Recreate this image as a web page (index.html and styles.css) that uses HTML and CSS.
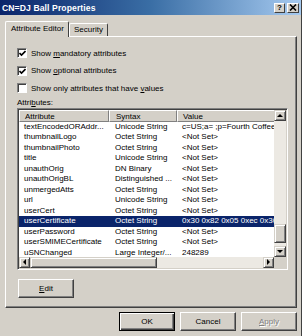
FILE: index.html
```html
<!DOCTYPE html>
<html>
<head>
<meta charset="utf-8">
<link rel="stylesheet" href="styles.css">
</head>
<body>
<div class="window">
  <div class="titlebar">
    <span class="title">CN=DJ Ball Properties</span>
    <div class="tbtns">
      <span class="tbtn">?</span>
      <span class="tbtn close"><svg width="8" height="7" viewBox="0 0 8 7"><path d="M1 0.5 L7 6.5 M7 0.5 L1 6.5" stroke="#000" stroke-width="1.6"/></svg></span>
    </div>
  </div>
  <div class="client">
    <div class="tabs">
      <div class="tab active">Attribute Editor</div>
      <div class="tab">Security</div>
    </div>
    <div class="panel">
      <label class="chk"><span class="box"><svg width="7" height="7" viewBox="0 0 7 7"><path d="M0.5 3 L2.5 5 L6.5 1" fill="none" stroke="#000" stroke-width="1.6"/></svg></span><span>Show <u>m</u>andatory attributes</span></label>
      <label class="chk"><span class="box"><svg width="7" height="7" viewBox="0 0 7 7"><path d="M0.5 3 L2.5 5 L6.5 1" fill="none" stroke="#000" stroke-width="1.6"/></svg></span><span>Show <u>o</u>ptional attributes</span></label>
      <label class="chk"><span class="box"></span><span>Show only attributes that have <u>v</u>alues</span></label>
      <div class="lbl">Attri<u>b</u>utes:</div>
      <div class="listview">
        <div class="lv-main">
          <div class="lv-row lv-head">
            <div class="c1 hc">Attribute</div>
            <div class="c2 hc">Syntax</div>
            <div class="c3 hc">Value</div>
          </div>
          <div class="lv-row"><div class="c1">textEncodedORAddr...</div><div class="c2">Unicode String</div><div class="c3">c=US;a= ;p=Fourth Coffee</div></div>
          <div class="lv-row"><div class="c1">thumbnailLogo</div><div class="c2">Octet String</div><div class="c3">&lt;Not Set&gt;</div></div>
          <div class="lv-row"><div class="c1">thumbnailPhoto</div><div class="c2">Octet String</div><div class="c3">&lt;Not Set&gt;</div></div>
          <div class="lv-row"><div class="c1">title</div><div class="c2">Unicode String</div><div class="c3">&lt;Not Set&gt;</div></div>
          <div class="lv-row"><div class="c1">unauthOrig</div><div class="c2">DN Binary</div><div class="c3">&lt;Not Set&gt;</div></div>
          <div class="lv-row"><div class="c1">unauthOrigBL</div><div class="c2">Distinguished ...</div><div class="c3">&lt;Not Set&gt;</div></div>
          <div class="lv-row"><div class="c1">unmergedAtts</div><div class="c2">Octet String</div><div class="c3">&lt;Not Set&gt;</div></div>
          <div class="lv-row"><div class="c1">url</div><div class="c2">Unicode String</div><div class="c3">&lt;Not Set&gt;</div></div>
          <div class="lv-row"><div class="c1">userCert</div><div class="c2">Octet String</div><div class="c3">&lt;Not Set&gt;</div></div>
          <div class="lv-row sel"><div class="c1">userCertificate</div><div class="c2">Octet String</div><div class="c3">0x30 0x82 0x05 0xec 0x30</div></div>
          <div class="lv-row"><div class="c1">userPassword</div><div class="c2">Octet String</div><div class="c3">&lt;Not Set&gt;</div></div>
          <div class="lv-row"><div class="c1">userSMIMECertificate</div><div class="c2">Octet String</div><div class="c3">&lt;Not Set&gt;</div></div>
          <div class="lv-row"><div class="c1">uSNChanged</div><div class="c2">Large Integer/...</div><div class="c3">248289</div></div>
        </div>
        <div class="vscroll">
          <div class="sbtn"><span class="tri up"></span></div>
          <div class="vtrack">
            <div class="vthumb"></div>
          </div>
          <div class="sbtn"><span class="tri down"></span></div>
        </div>
        <div class="hscroll">
          <div class="sbtn"><span class="tri left"></span></div>
          <div class="hthumb"></div>
          <div class="htrack"></div>
          <div class="sbtn"><span class="tri right"></span></div>
        </div>
        <div class="corner"></div>
      </div>
      <div class="btn edit"><span><u>E</u>dit</span></div>
    </div>
    <div class="footer">
      <div class="btn def">OK</div>
      <div class="btn">Cancel</div>
      <div class="btn dis"><span><u>A</u>pply</span></div>
    </div>
  </div>
</div>
</body>
</html>
```
FILE: styles.css
```css
html, body {
  margin: 0;
  padding: 0;
  background: #d4d0c8;
}
body {
  font-family: "Liberation Sans", Arial, sans-serif;
  font-size: 8px;
  color: #000;
}
.window {
  width: 302px;
  height: 336px;
  box-sizing: border-box;
  border-right: 1px solid #404040;
  display: flex;
  flex-direction: column;
  overflow: hidden;
}
.titlebar {
  height: 15px;
  background: linear-gradient(to right, #0a246a 0%, #3a6ea5 50%, #a6caf0 100%);
  display: flex;
  align-items: center;
  padding-left: 2px;
  padding-right: 2px;
  box-sizing: border-box;
}
.title {
  color: #fff;
  font-weight: bold;
  font-size: 8.6px;
  letter-spacing: 0.1px;
}
.tbtns {
  margin-left: auto;
  display: flex;
  gap: 2px;
}
.tbtn {
  width: 11px;
  height: 10px;
  box-sizing: border-box;
  background: #d4d0c8;
  border-top: 1px solid #fff;
  border-left: 1px solid #fff;
  border-right: 1px solid #404040;
  border-bottom: 1px solid #404040;
  font-weight: bold;
  font-size: 8px;
  line-height: 8px;
  text-align: center;
  display: flex;
  align-items: center;
  justify-content: center;
}
.close {
  width: 12px;
}
.client {
  flex: 1;
  display: flex;
  flex-direction: column;
  padding: 6px 4px 0 5px;
}
.tabs {
  display: flex;
  align-items: flex-end;
  height: 15px;
  position: relative;
  z-index: 1;
}
.tab {
  height: 13px;
  box-sizing: border-box;
  padding: 0 4px;
  border-top: 1px solid #fff;
  border-left: 1px solid #fff;
  border-right: 1px solid #404040;
  border-radius: 2px 2px 0 0;
  line-height: 12px;
}
.tab.active {
  height: 16px;
  margin-bottom: -1px;
  width: 64px;
  padding: 0 0 0 5px;
  line-height: 13px;
  background: #d4d0c8;
}
.panel {
  height: 272px;
  box-sizing: border-box;
  border-top: 1px solid #fff;
  border-left: 1px solid #fff;
  border-right: 1px solid #404040;
  border-bottom: 1px solid #404040;
  box-shadow: inset -1px -1px 0 #808080;
  padding: 11px 9px 0 11px;
  display: flex;
  flex-direction: column;
}
.chk {
  display: flex;
  align-items: center;
  height: 10px;
  margin-bottom: 7.5px;
  white-space: nowrap;
}
.box {
  flex: none;
  width: 10px;
  height: 10px;
  box-sizing: border-box;
  background: #fff;
  border-top: 1px solid #808080;
  border-left: 1px solid #808080;
  border-right: 1px solid #fff;
  border-bottom: 1px solid #fff;
  box-shadow: inset 1px 1px 0 #404040;
  margin-right: 4px;
  display: flex;
  align-items: center;
  justify-content: center;
  padding: 1px 0 0 1px;
}
.lbl {
  margin-top: -3px;
  height: 10px;
  line-height: 10px;
}
.listview {
  margin-top: 0px;
  width: 271px;
  height: 162px;
  box-sizing: border-box;
  border-top: 1px solid #808080;
  border-left: 1px solid #808080;
  border-right: 1px solid #fff;
  border-bottom: 1px solid #fff;
  box-shadow: inset 1px 1px 0 #404040, inset -1px -1px 0 #d4d0c8;
  padding: 1px 1px 1px 1px;
  display: grid;
  grid-template-columns: 1fr 12px;
  grid-template-rows: 1fr 11px;
  background: #fff;
}
.lv-main {
  overflow: hidden;
  background: #fff;
}
.lv-row {
  display: flex;
  height: 10.5px;
  line-height: 10.5px;
  white-space: nowrap;
}
.lv-row > div {
  overflow: hidden;
  box-sizing: border-box;
  flex: none;
}
.c1 { width: 90px; padding-left: 5px; }
.c2 { width: 68px; padding-left: 6px; }
.c3 { width: 110px; padding-left: 5px; }
.lv-head {
  height: 12px;
  line-height: 11px;
}
.lv-head .hc {
  background: #d4d0c8;
  border-top: 1px solid #fff;
  border-left: 1px solid #fff;
  border-right: 1px solid #808080;
  border-bottom: 1px solid #808080;
  box-shadow: 1px 0 0 #404040;
}
.lv-row.sel {
  background: #0a246a;
  color: #fff;
}
.vscroll {
  display: flex;
  flex-direction: column;
  background: #ece9e3;
}
.sbtn {
  flex: none;
  box-sizing: border-box;
  width: 12px;
  height: 11px;
  background: #d4d0c8;
  border-top: 1px solid #d4d0c8;
  border-left: 1px solid #d4d0c8;
  border-right: 1px solid #404040;
  border-bottom: 1px solid #404040;
  box-shadow: inset 1px 1px 0 #fff, inset -1px -1px 0 #808080;
  display: flex;
  align-items: center;
  justify-content: center;
}
.vtrack {
  flex: 1;
  display: flex;
  flex-direction: column;
  justify-content: flex-end;
  padding-bottom: 3px;
}
.vthumb {
  height: 19px;
  box-sizing: border-box;
  background: #d4d0c8;
  border-top: 1px solid #d4d0c8;
  border-left: 1px solid #d4d0c8;
  border-right: 1px solid #404040;
  border-bottom: 1px solid #404040;
  box-shadow: inset 1px 1px 0 #fff, inset -1px -1px 0 #808080;
}
.hscroll {
  display: flex;
  background: #ece9e3;
}
.hscroll .sbtn {
  width: 11px;
  height: 11px;
}
.hthumb {
  width: 127px;
  box-sizing: border-box;
  background: #d4d0c8;
  border-top: 1px solid #d4d0c8;
  border-left: 1px solid #d4d0c8;
  border-right: 1px solid #404040;
  border-bottom: 1px solid #404040;
  box-shadow: inset 1px 1px 0 #fff, inset -1px -1px 0 #808080;
}
.htrack {
  flex: 1;
}
.corner {
  background: #d4d0c8;
}
.tri {
  width: 0;
  height: 0;
  border-style: solid;
}
.tri.up { border-width: 0 3px 3px 3px; border-color: transparent transparent #000 transparent; }
.tri.down { border-width: 3px 3px 0 3px; border-color: #000 transparent transparent transparent; }
.tri.left { border-width: 3px 3px 3px 0; border-color: transparent #000 transparent transparent; }
.tri.right { border-width: 3px 0 3px 3px; border-color: transparent transparent transparent #000; }
.btn {
  width: 56px;
  height: 19px;
  box-sizing: border-box;
  background: #d4d0c8;
  border-top: 1px solid #fff;
  border-left: 1px solid #fff;
  border-right: 1px solid #404040;
  border-bottom: 1px solid #404040;
  box-shadow: inset -1px -1px 0 #808080;
  display: flex;
  align-items: center;
  justify-content: center;
}
.btn.edit {
  margin-top: 9px;
  margin-left: 1px;
}
.btn.def {
  border: 1px solid #000;
  box-shadow: inset 1px 1px 0 #fff, inset -1px -1px 0 #404040, inset -2px -2px 0 #808080;
}
.btn.dis {
  color: #808080;
  text-shadow: 1px 1px 0 #fff;
}
.footer {
  display: flex;
  justify-content: flex-end;
  gap: 5px;
  margin-top: 4px;
  padding-right: 0px;
}
```
